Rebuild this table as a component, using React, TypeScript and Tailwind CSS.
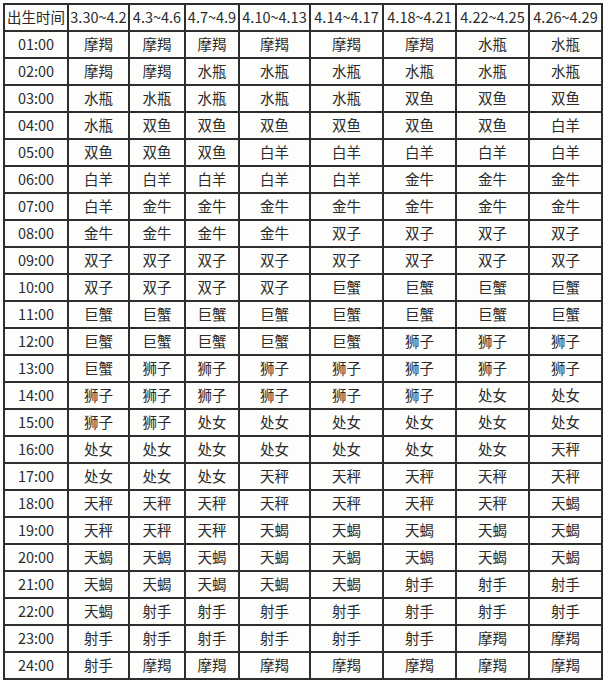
const ranges = ["3.30~4.2", "4.3~4.6", "4.7~4.9", "4.10~4.13", "4.14~4.17", "4.18~4.21", "4.22~4.25", "4.26~4.29"];

const rows = [
  "摩羯 摩羯 摩羯 摩羯 摩羯 摩羯 水瓶 水瓶",
  "摩羯 摩羯 水瓶 水瓶 水瓶 水瓶 水瓶 水瓶",
  "水瓶 水瓶 水瓶 水瓶 水瓶 双鱼 双鱼 双鱼",
  "水瓶 双鱼 双鱼 双鱼 双鱼 双鱼 双鱼 白羊",
  "双鱼 双鱼 双鱼 白羊 白羊 白羊 白羊 白羊",
  "白羊 白羊 白羊 白羊 白羊 金牛 金牛 金牛",
  "白羊 金牛 金牛 金牛 金牛 金牛 金牛 金牛",
  "金牛 金牛 金牛 金牛 双子 双子 双子 双子",
  "双子 双子 双子 双子 双子 双子 双子 双子",
  "双子 双子 双子 双子 巨蟹 巨蟹 巨蟹 巨蟹",
  "巨蟹 巨蟹 巨蟹 巨蟹 巨蟹 巨蟹 巨蟹 巨蟹",
  "巨蟹 巨蟹 巨蟹 巨蟹 巨蟹 狮子 狮子 狮子",
  "巨蟹 狮子 狮子 狮子 狮子 狮子 狮子 狮子",
  "狮子 狮子 狮子 狮子 狮子 狮子 处女 处女",
  "狮子 狮子 处女 处女 处女 处女 处女 处女",
  "处女 处女 处女 处女 处女 处女 处女 天秤",
  "处女 处女 处女 天秤 天秤 天秤 天秤 天秤",
  "天秤 天秤 天秤 天秤 天秤 天秤 天秤 天蝎",
  "天秤 天秤 天秤 天蝎 天蝎 天蝎 天蝎 天蝎",
  "天蝎 天蝎 天蝎 天蝎 天蝎 天蝎 天蝎 天蝎",
  "天蝎 天蝎 天蝎 天蝎 天蝎 射手 射手 射手",
  "天蝎 射手 射手 射手 射手 射手 射手 射手",
  "射手 射手 射手 射手 射手 射手 摩羯 摩羯",
  "射手 摩羯 摩羯 摩羯 摩羯 摩羯 摩羯 摩羯",
].map((r) => r.split(" "));

const cell = "bg-[#fdfdfc] h-[25px] flex items-center justify-center whitespace-nowrap";

export default function App() {
  return (
    <div className="min-h-screen bg-white pl-[3px] pt-[3px] text-[#2b2b2b] text-[14.5px] leading-none font-['Noto_Sans_CJK_SC','Noto_Sans',sans-serif]">
      <div className="inline-grid grid-cols-[62px_59px_54px_52px_69px_71px_71px_71px_71px] gap-[2px] p-[2px] bg-[#2e2e2e]">
        <div className={cell}>出生时间</div>
        {ranges.map((r) => (
          <div key={r} className={cell}>
            {r}
          </div>
        ))}
        {rows.map((signs, i) => {
          const hour = `${String(i + 1).padStart(2, "0")}:00`;
          return [
            <div key={hour} className={cell}>
              {hour}
            </div>,
            ...signs.map((s, j) => (
              <div key={`${hour}-${j}`} className={cell}>
                {s}
              </div>
            )),
          ];
        })}
      </div>
    </div>
  );
}
